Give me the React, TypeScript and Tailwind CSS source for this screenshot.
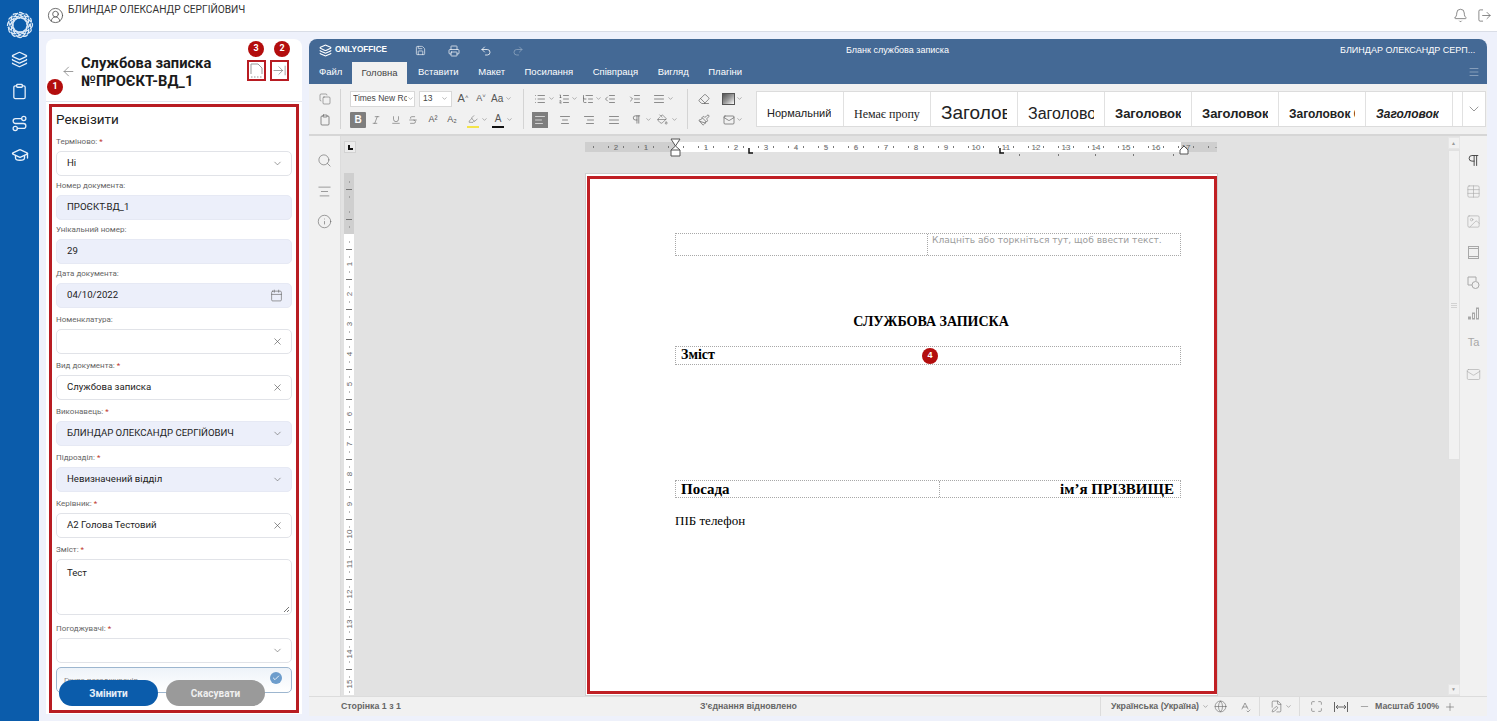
import {
  AlignCenter, AlignJustify, AlignLeft, AlignRight, ArrowLeft, ArrowRightToLine, Bell, Calendar, Check, ChevronDown,
  CircleUserRound, Clipboard, Copy, Eraser, FilePen, Globe, GraduationCap, Highlighter, Image, IndentDecrease,
  IndentIncrease, Info, Italic, Layers, List, ListOrdered, ListTree, LogOut, Mail, Maximize, Menu, Minus, PaintBucket,
  Paintbrush, Pilcrow, Plus, Printer, Redo2, Route, Save, Search, SpellCheck, Strikethrough, Table, Underline, Undo2, X,
} from 'lucide-react'
import type { ReactNode } from 'react'

const GALLERY = [
  { name: 'Нормальний', cls: "text-[11px] font-['Liberation_Sans'] text-[#222]" },
  { name: 'Немає пропу', cls: "text-[12px] font-['Liberation_Serif'] text-[#222]" },
  { name: 'Заголовок 1', cls: "text-[19px] font-['Liberation_Sans'] text-[#222]" },
  { name: 'Заголовок 2', cls: "text-[16px] font-['Liberation_Sans'] text-[#222]" },
  { name: 'Заголовок 3', cls: "text-[13px] font-bold font-['Liberation_Sans'] text-[#222]" },
  { name: 'Заголовок', cls: "text-[13px] font-bold font-['Liberation_Sans'] text-[#222]" },
  { name: 'Заголовок 6', cls: "text-[12px] font-bold font-['Liberation_Sans'] text-[#222]" },
  { name: 'Заголовок', cls: "text-[12px] font-bold italic font-['Liberation_Sans'] text-[#222]" },
]

const TABS = ['Вставити', 'Макет', 'Посилання', 'Співпраця', 'Вигляд', 'Плагіни']

function Logo() {
  return (
    <svg width="28" height="28" viewBox="0 0 28 28" fill="none" stroke="#dbe8f6" strokeWidth="1.3">
      {[0, 30, 60, 90, 120, 150].map((a) => (
        <ellipse key={a} cx="14" cy="14" rx="12.5" ry="7" strokeDasharray="5 1" transform={`rotate(${a} 14 14)`} />
      ))}
    </svg>
  )
}

function Badge({ n, className }: { n: number; className: string }) {
  return (
    <span className={`absolute z-10 flex h-[16px] w-[16px] items-center justify-center rounded-full bg-[#b30d0d] text-[9px] font-bold text-white ${className}`}>
      {n}
    </span>
  )
}

function Field({
  label, req, value, filled, icon,
}: { label: string; req?: boolean; value?: string; filled?: boolean; icon: ReactNode }) {
  return (
    <div className="mb-[4px]">
      <div className="h-[15px] text-[8px] leading-[12px] text-[#666]">
        {label}
        {req && <span className="text-[#c0392b]"> *</span>}
      </div>
      <div className={`flex h-[25px] items-center justify-between rounded-[5px] border pl-[10px] pr-[8px] text-[9.6px] text-[#222] ${filled ? 'border-[#e6e9f4] bg-[#eceffa]' : 'border-[#e1e3e8] bg-white'}`}>
        <span>{value}</span>
        {icon}
      </div>
    </div>
  )
}

const chev = <ChevronDown size={11} strokeWidth={1.4} className="text-[#666]" />
const clear = <X size={11} strokeWidth={1.4} className="text-[#555]" />

function Tb({ children, x }: { children: ReactNode; x: string }) {
  return <span className={`flex h-[16px] shrink-0 items-center justify-center text-[#555] ${x}`}>{children}</span>
}

const ic = { size: 12, strokeWidth: 1.3 }
const tinyChev = <ChevronDown size={7} strokeWidth={1.6} className="shrink-0 text-[#666]" />

function HRuler() {
  const cm = [-2, -1, 1, 2, 3, 4, 5, 6, 7, 8, 9, 10, 11, 12, 13, 14, 15, 16, 17]
  return (
    <svg width="632" height="14" className="block overflow-visible" style={{ fontFamily: 'Liberation Sans' }}>
      <rect x="0" y="2" width="632" height="10" fill="#cfcfcf" />
      <rect x="90" y="2" width="506" height="10" fill="#fff" />
      {cm.map((n) => (
        <text key={n} x={91 + n * 30} y="10" fontSize="8" textAnchor="middle" fill="#666">{Math.abs(n)}</text>
      ))}
      {Array.from({ length: 84 }).map((_, i) =>
        i % 4 === 1 ? null : <rect key={i} x={8 + i * 7.5} y={i % 2 ? 7 : 6} width="1" height={i % 2 ? 1 : 2} fill="#777" />,
      )}
      {[434, 473, 510, 548, 588].map((x) => (
        <rect key={x} x={x} y="14" width="1" height="2" fill="#777" />
      ))}
      <path d="M86-1h9l-4.500 7 4.500 4v6h-9v-6l4.500-4z" fill="#fff" stroke="#555" />
      <path d="M86 10h9" stroke="#555" />
      <path d="M164 8v5h4" fill="none" stroke="#111" strokeWidth="1.500" />
      <path d="M415 8v5h4" fill="none" stroke="#111" strokeWidth="1.500" />
      <path d="M595 14h8v-4l-4-4-4 4z" fill="#fff" stroke="#555" />
    </svg>
  )
}

function VRuler() {
  return (
    <svg width="10" height="522" className="block" style={{ fontFamily: 'Liberation Sans' }}>
      <rect width="10" height="522" fill="#fff" />
      <rect width="10" height="61" fill="#cfcfcf" />
      {Array.from({ length: 70 }).map((_, i) =>
        i % 4 === 0 ? null : <rect key={i} x={i % 2 ? 5 : 2} y={1 + i * 7.5} width={i % 2 ? 1 : 6} height="1" fill="#777" />,
      )}
      {Array.from({ length: 16 }).map((_, i) => (
        <text key={i} x="5" y={64 + i * 30} fontSize="8" textAnchor="middle" fill="#666" transform={`rotate(-90 5 ${61 + i * 30})`}>
          {i || ''}
        </text>
      ))}
    </svg>
  )
}

const panelIc = { size: 15, strokeWidth: 1, className: 'text-[#a8a8a8]' }

export default function App() {
  return (
    <div className="flex h-[721px] w-[1497px] overflow-hidden bg-[#eef1fb] font-['Roboto',sans-serif]">
      {/* sidebar */}
      <aside className="flex w-[39px] shrink-0 flex-col items-center bg-[#0b5cab] pt-[11px] text-[#e8f0fa]">
        <Logo />
        <Layers size={17} strokeWidth={1.8} className="mt-[12px]" />
        <Clipboard size={17} strokeWidth={1.8} className="mt-[15px]" />
        <Route size={17} strokeWidth={1.8} className="mt-[15px]" />
        <GraduationCap size={18} strokeWidth={1.8} className="mt-[14px]" />
      </aside>

      <div className="flex min-w-0 flex-1 flex-col">
        {/* top bar */}
        <header className="flex h-[32px] shrink-0 items-start border-b border-[#d9dde6] bg-white pl-[8px] pr-[5px]">
          <CircleUserRound size={17} strokeWidth={1.2} className="mt-[7px] text-[#555]" />
          <span className="ml-[4px] mt-[4px] text-[10.2px] leading-[12px] text-[#333]">БЛИНДАР ОЛЕКСАНДР СЕРГІЙОВИЧ</span>
          <Bell size={15} strokeWidth={1.2} className="ml-auto mt-[8px] text-[#666]" />
          <LogOut size={15} strokeWidth={1.2} className="ml-[9px] mt-[8px] text-[#666]" />
        </header>

        <div className="flex min-h-0 flex-1 gap-[7px] pl-[7px] pt-[7px]">
          {/* left card */}
          <section className="relative h-[675px] w-[256px] shrink-0 rounded-t-lg bg-white">
            <Badge n={1} className="left-[1px] top-[40px]" />
            <Badge n={3} className="left-[202px] top-[2px]" />
            <Badge n={2} className="left-[228px] top-[2px]" />
            <div className="relative flex h-[63px] items-center border-b border-[#e3e6ee] pl-[15px]">
              <ArrowLeft size={15} strokeWidth={1.3} className="mt-[2px] text-[#888]" />
              <h1 className="ml-[5px] mt-[3px] text-[14.7px] font-bold leading-[18px] text-[#1b1b1b]">
                Службова записка
                <br />
                №ПРОЄКТ-ВД_1
              </h1>
              <div className="absolute left-[201px] top-[21px] flex gap-[4px]">
                <span className="flex h-[21px] w-[19px] items-center justify-center border-2 border-[#b81c22]">
                  <svg width="13" height="15" viewBox="0 0 13 15" fill="none" stroke="#999">
                    <path d="M1 11V1h7l4 4v6" />
                    <path d="M1 14h11" strokeDasharray="1.500 1.500" />
                  </svg>
                </span>
                <span className="flex h-[21px] w-[19px] items-center justify-center border-2 border-[#b81c22]">
                  <ArrowRightToLine size={15} strokeWidth={1.2} className="text-[#888]" />
                </span>
              </div>
            </div>

            {/* requisites */}
            <div className="relative mx-[3px] mt-[2px] h-[609px] overflow-hidden border-[3px] border-[#b81c22] pl-[4px] pr-[4px]">
              <h2 className="mb-[8px] mt-[3px] text-[13.500px] font-normal leading-[18px] text-[#222]">Реквізити</h2>
              <Field label="Терміново:" req value="Ні" icon={chev} />
              <Field label="Номер документа:" value="ПРОЄКТ-ВД_1" filled icon={null} />
              <Field label="Унікальний номер:" value="29" filled icon={null} />
              <Field label="Дата документа:" value="04/10/2022" filled icon={<Calendar size={13} strokeWidth={1.2} className="text-[#666]" />} />
              <div className="h-[2px]" />
              <Field label="Номенклатура:" icon={clear} />
              <div className="h-[2px]" />
              <Field label="Вид документа:" req value="Службова записка" icon={clear} />
              <div className="h-[2px]" />
              <Field label="Виконавець:" req value="БЛИНДАР ОЛЕКСАНДР СЕРГІЙОВИЧ" filled icon={chev} />
              <div className="h-[2px]" />
              <Field label="Підрозділ:" req value="Невизначений відділ" filled icon={chev} />
              <div className="h-[2px]" />
              <Field label="Керівник:" req value="А2 Голова Тестовий" icon={clear} />
              <div className="h-[2px]" />
              <div className="h-[15px] text-[8px] leading-[12px] text-[#666]">
                Зміст: <span className="text-[#c0392b]">*</span>
              </div>
              <div className="relative h-[56px] rounded-[5px] border border-[#e1e3e8] pl-[10px] pt-[6px] text-[9.6px] text-[#222]">
                Тест
                <svg width="7" height="7" viewBox="0 0 7 7" className="absolute bottom-[1px] right-[1px]" stroke="#777" fill="none">
                  <path d="M1 6l5-5M4 6l2-2" />
                </svg>
              </div>
              <div className="h-[8px]" />
              <Field label="Погоджувачі:" req icon={chev} />
              <div className="relative h-[26px] rounded-[5px] border border-[#9db6cf] bg-gradient-to-b from-[#eef3f9] to-white pl-[7px] pt-[7px] text-[8px] leading-[12px] text-[#888]">
                Група погоджувачів
                <span className="absolute right-[9px] top-[4px] flex h-[12px] w-[12px] items-center justify-center rounded-full bg-[#6d9dcc]">
                  <Check size={8} strokeWidth={2.5} className="text-white" />
                </span>
              </div>
              <div className="absolute bottom-[4px] left-[7px] flex gap-[8px]">
                <button className="h-[26px] w-[99px] rounded-full bg-[#0b5cab] text-[10px] font-bold text-[#e6eef8]">Змінити</button>
                <button className="h-[26px] w-[99px] rounded-full bg-[#9a9a9a] text-[10px] font-bold text-[#efefef]">Скасувати</button>
              </div>
            </div>
          </section>

          {/* editor */}
          <section className="flex h-[677px] w-[1178px] shrink-0 flex-col overflow-hidden rounded-t-lg font-['Liberation_Sans',sans-serif]">
            <div className="flex h-[23px] shrink-0 items-center whitespace-nowrap bg-[#446995] pl-[10px] text-white">
              <Layers size={13} strokeWidth={2} />
              <span className="ml-[3px] w-[52px] text-[8.2px] font-bold leading-none">ONLYOFFICE</span>
              <Save size={11} strokeWidth={1.4} className="ml-[28px]" />
              <Printer size={12} strokeWidth={1.4} className="ml-[22px]" />
              <Undo2 size={12} strokeWidth={1.6} className="ml-[20px]" />
              <Redo2 size={12} strokeWidth={1.6} className="ml-[20px] opacity-40" />
              <span className="ml-[322px] w-[108px] text-[9px]">Бланк службова записка</span>
              <span className="ml-[386px] text-[9px]">БЛИНДАР ОЛЕКСАНДР СЕРП...</span>
            </div>
            <div className="flex h-[22px] shrink-0 items-end bg-[#446995] pl-[10px] pr-[7px] text-[9.500px] text-white">
              <span className="mb-[5px] w-[23px]">Файл</span>
              <span className="ml-[10px] flex h-[22px] w-[55px] items-center justify-center bg-[#f1f1f1] text-[#444]">Головна</span>
              <span className="mb-[5px] ml-[11px] flex gap-[19.500px]">
                {TABS.map((t) => <span key={t}>{t}</span>)}
              </span>
              <Menu size={12} strokeWidth={1} className="mb-[6px] ml-auto opacity-70" />
            </div>

            {/* toolbar */}
            <div className="flex h-[52px] shrink-0 items-center border-b-2 border-[#d6d6d6] bg-[#f1f1f1] pl-[10px]">
              <div className="flex w-[12px] flex-col gap-[5px] text-[#888]">
                <Tb x=""><Copy size={12} strokeWidth={1} /></Tb>
                <Tb x="text-[#444]"><Clipboard size={12} strokeWidth={1.3} /></Tb>
              </div>
              <div className="ml-[9px] h-[40px] w-px bg-[#d4d4d4]" />
              <div className="ml-[9px] flex w-[165px] flex-col gap-[5px]">
                <div className="flex h-[16px] items-center">
                  <span className="flex h-[16px] w-[65px] items-center border border-[#d8d8d8] bg-white pl-[2px] text-[8.500px] text-[#444]">
                    <span className="w-[54px] overflow-hidden whitespace-nowrap">Times New Roman</span>{tinyChev}
                  </span>
                  <span className="ml-[4px] flex h-[16px] w-[33px] items-center justify-between border border-[#d8d8d8] bg-white px-[3px] text-[8.500px] text-[#444]">13{tinyChev}</span>
                  <span className="ml-[4px] w-[14px] text-center text-[11px] text-[#555]">A<sup className="text-[6px]">˄</sup></span>
                  <span className="ml-[4px] w-[14px] text-center text-[9px] text-[#555]">A<sup className="text-[6px]">˅</sup></span>
                  <span className="ml-[3px] text-[10px] text-[#555]">Aa</span>
                  <span className="ml-[2px]">{tinyChev}</span>
                </div>
                <div className="flex h-[16px] items-center text-[#555]">
                  <span className="flex h-[16px] w-[16px] items-center justify-center rounded-[1px] bg-[#7e7e7e] text-[10px] font-bold text-white">B</span>
                  <Tb x="ml-[4px] w-[12px]"><Italic size={10} strokeWidth={1.3} /></Tb>
                  <Tb x="ml-[8px] w-[12px]"><Underline size={10} strokeWidth={1.3} /></Tb>
                  <Tb x="ml-[5px] w-[12px]"><Strikethrough size={10} strokeWidth={1.3} /></Tb>
                  <Tb x="ml-[8px] w-[12px] text-[9px]">A²</Tb>
                  <Tb x="ml-[7px] w-[12px] text-[9px]">A₂</Tb>
                  <Tb x="ml-[9px] w-[12px] flex-col border-b-2 border-[#f4e44a]"><Highlighter size={10} strokeWidth={1.2} /></Tb>
                  <span className="ml-[2px]">{tinyChev}</span>
                  <Tb x="ml-[4px] w-[12px] border-b-2 border-[#111] text-[10px]">A</Tb>
                  <span className="ml-[2px]">{tinyChev}</span>
                </div>
              </div>
              <div className="ml-[8px] h-[40px] w-px bg-[#d4d4d4]" />
              <div className="ml-[8px] flex w-[147px] flex-col gap-[5px]">
                <div className="flex h-[16px] items-center pl-[1px]">
                  <Tb x="w-[13px]"><List {...ic} /></Tb><span className="ml-[2px]">{tinyChev}</span>
                  <Tb x="ml-[2px] w-[13px]"><ListOrdered {...ic} /></Tb><span className="ml-[1px]">{tinyChev}</span>
                  <Tb x="ml-[3px] w-[13px]"><ListTree {...ic} /></Tb><span className="ml-[1px]">{tinyChev}</span>
                  <Tb x="ml-[1px] w-[13px]"><IndentDecrease {...ic} /></Tb>
                  <Tb x="ml-[12px] w-[13px]"><IndentIncrease {...ic} /></Tb>
                  <Tb x="ml-[11px] w-[14px]"><AlignJustify {...ic} /></Tb><span className="ml-[1px]">{tinyChev}</span>
                </div>
                <div className="flex h-[16px] items-center">
                  <span className="flex h-[16px] w-[16px] items-center justify-center bg-[#7e7e7e] text-white"><AlignLeft {...ic} /></span>
                  <Tb x="ml-[10px] w-[13px]"><AlignCenter {...ic} /></Tb>
                  <Tb x="ml-[11px] w-[13px]"><AlignRight {...ic} /></Tb>
                  <Tb x="ml-[12px] w-[13px]"><AlignJustify {...ic} /></Tb>
                  <Tb x="ml-[10px] w-[12px]"><Pilcrow size={11} strokeWidth={1.4} /></Tb>
                  <span className="ml-[3px]">{tinyChev}</span>
                  <Tb x="ml-[3px] w-[14px]"><PaintBucket size={11} strokeWidth={1.2} /></Tb>
                  <span className="ml-[2px]">{tinyChev}</span>
                </div>
              </div>
              <div className="ml-[8px] h-[40px] w-px bg-[#d4d4d4]" />
              <div className="ml-[8px] flex w-[56px] flex-col gap-[5px]">
                <div className="flex h-[16px] items-center pl-[1px]">
                  <Tb x="w-[13px]"><Eraser {...ic} /></Tb>
                  <span className="ml-[12px] h-[12px] w-[13px] border border-[#555] bg-gradient-to-br from-[#555] via-[#999] to-white" />
                  <span className="ml-[1px]">{tinyChev}</span>
                </div>
                <div className="flex h-[16px] items-center pl-[1px]">
                  <Tb x="w-[13px]"><Paintbrush {...ic} /></Tb>
                  <Tb x="ml-[12px] w-[13px]"><Mail {...ic} /></Tb>
                  <span className="ml-[1px]">{tinyChev}</span>
                </div>
              </div>
              <div className="ml-[4px] flex h-[36px] w-[730px] shrink-0 items-stretch border border-[#dcdcdc] bg-white">
                <div className="flex">
                  {GALLERY.map((g) => (
                    <div key={g.name + g.cls} className="flex w-[87px] items-center border-r border-[#e1e1e1] px-[10px] pt-[9px]">
                      <span className={`block overflow-hidden whitespace-nowrap ${g.cls}`}>{g.name}</span>
                    </div>
                  ))}
                </div>
                <div className="w-[10px] border-r border-[#e1e1e1]" />
                <div className="flex flex-1 items-center justify-center">
                  <ChevronDown size={16} strokeWidth={1} className="text-[#666]" />
                </div>
              </div>
            </div>

            {/* canvas */}
            <div className="flex min-h-0 flex-1">
              <div className="flex w-[32px] shrink-0 flex-col items-center gap-[15.500px] border-r border-[#dcdcdc] bg-[#f1f1f1] pt-[17px] text-[#666]">
                <Search size={15} strokeWidth={1} />
                <AlignCenter size={15} strokeWidth={1} />
                <Info size={15} strokeWidth={1} />
              </div>
              <div className="min-w-0 flex-1 overflow-hidden bg-[#e2e2e2] pl-[3px] pt-[4px]">
                <div className="flex h-[14px] items-start">
                  <span className="mt-[1px] flex h-[12px] w-[12px] shrink-0 items-center justify-center border border-[#d2d2d2] bg-[#ececec]">
                    <span className="h-[5px] w-[5px] border-b-2 border-l-2 border-[#111]" />
                  </span>
                  <div className="ml-[229px]"><HRuler /></div>
                </div>
                <div className="mt-[19px] flex items-start">
                  <VRuler />
                  <div className="relative ml-[231px] h-[523px] w-[633px] shrink-0 border border-[#cfcfcf] bg-white pl-[1px] pt-[2px]">
                    <Badge n={4} className="left-[336px] top-[174px]" />
                    <div className="h-[518px] w-[630px] border-[3px] border-[#c01f24] pl-[85px] font-['Liberation_Serif',serif] text-black">
                      <div className="mt-[54px] flex h-[23px] w-[506px] border border-dotted border-[#a8a8a8]">
                        <div className="w-[252px] border-r border-dotted border-[#a8a8a8]" />
                        <div className="pl-[4px] font-['DejaVu_Sans',sans-serif] text-[9.100px] leading-[13px] text-[#9c9c9c]">Клацніть або торкніться тут, щоб ввести текст.</div>
                      </div>
                      <div className="mt-[57px] w-[506px] pl-[6px] text-center text-[14px] font-bold leading-[17px]">СЛУЖБОВА ЗАПИСКА</div>
                      <div className="mt-[16px] h-[19px] w-[506px] border border-dotted border-[#a8a8a8] pl-[5px] text-[14px] font-bold leading-[15px]">Зміст</div>
                      <div className="mt-[115px] flex h-[18px] w-[506px] border border-dotted border-[#a8a8a8] text-[15px] font-bold leading-[17px]">
                        <div className="w-[264px] border-r border-dotted border-[#a8a8a8] pl-[5px]">Посада</div>
                        <div className="flex-1 pr-[6px] text-right">ім’я ПРІЗВИЩЕ</div>
                      </div>
                      <div className="mt-[14px] text-[13px] leading-[17px]">ПІБ телефон</div>
                    </div>
                  </div>
                </div>
              </div>

              {/* scrollbar */}
              <div className="flex w-[13px] shrink-0 flex-col items-center bg-[#e2e2e2]">
                <div className="mt-[1px] h-[12px] w-[12px] border border-[#e6e6e6] bg-[#f1f1f1] text-center text-[5px] leading-[10px] text-[#999]">▲</div>
                <div className="mt-[1px] flex h-[310px] w-[12px] flex-col items-center justify-center gap-[1px] border border-[#e1e1e1] bg-[#f1f1f1]">
                  <span className="h-px w-[6px] bg-[#d2d2d2]" />
                  <span className="h-px w-[6px] bg-[#d2d2d2]" />
                  <span className="h-px w-[6px] bg-[#d2d2d2]" />
                </div>
                <div className="mb-[1px] mt-auto h-[11px] w-[12px] border border-[#e6e6e6] bg-[#f1f1f1] text-center text-[5px] leading-[9px] text-[#999]">▼</div>
              </div>

              <div className="flex w-[27px] shrink-0 flex-col items-center gap-[15.500px] bg-[#f1f1f1] pt-[17px]">
                <Pilcrow size={15} strokeWidth={1.5} className="text-[#444]" />
                <Table {...panelIc} />
                <Image {...panelIc} />
                <svg width="15" height="15" viewBox="0 0 15 15" fill="none" stroke="#a8a8a8"><rect x="2.500" y="1.500" width="10" height="12" /><path d="M2.500 3.500h10M2.500 11.500h10" /></svg>
                <svg width="15" height="15" viewBox="0 0 15 15" fill="none" stroke="#a8a8a8"><path d="M6 10H2V2h8v4" /><circle cx="9.500" cy="10" r="3.500" /></svg>
                <svg width="15" height="15" viewBox="0 0 15 15" fill="none" stroke="#a8a8a8"><rect x="2.500" y="11" width="2" height="2" /><rect x="6.500" y="7" width="2" height="6" /><rect x="10.500" y="2" width="2" height="11" /></svg>
                <span className="flex h-[15px] w-[15px] items-start justify-center text-[11px] leading-[12px] text-[#a8a8a8]">Ta</span>
                <Mail {...panelIc} />
              </div>
            </div>

            {/* status bar */}
            <footer className="flex h-[20px] shrink-0 items-center whitespace-nowrap border-t border-[#dcdcdc] bg-[#f1f1f1] pl-[32px] text-[8.800px] font-bold text-[#666]">
              <span className="w-[359px]">Сторінка 1 з 1</span>
              <span className="w-[400px]">З'єднання відновлено</span>
              <span className="flex h-full items-center border-l border-[#dcdcdc] pl-[10px]">
                <span className="w-[87px]">Українська (Україна)</span>
                <span className="ml-[4px]">{tinyChev}</span>
                <Globe size={13} strokeWidth={1.1} className="ml-[5px]" />
                <SpellCheck size={12} strokeWidth={1.2} className="ml-[12px]" />
              </span>
              <span className="ml-[8px] flex h-full items-center border-l border-[#dcdcdc] pl-[10px]">
                <FilePen size={13} strokeWidth={1.1} />
                <span className="ml-[2px]">{tinyChev}</span>
              </span>
              <span className="ml-[7px] flex h-full items-center border-l border-[#dcdcdc] pl-[10px]">
                <Maximize size={13} strokeWidth={1.1} />
                <svg width="14" height="10" viewBox="0 0 14 10" fill="none" stroke="#666" className="ml-[11px]">
                  <path d="M.5 0v10M13.500 0v10M2 5h10M4 3L2 5l2 2M10 3l2 2-2 2" />
                </svg>
                <Minus size={11} strokeWidth={1.2} className="ml-[11px]" />
                <span className="ml-[5px]">Масштаб 100%</span>
                <Plus size={12} strokeWidth={1.2} className="ml-[5px]" />
              </span>
            </footer>
          </section>
        </div>
      </div>
    </div>
  )
}
